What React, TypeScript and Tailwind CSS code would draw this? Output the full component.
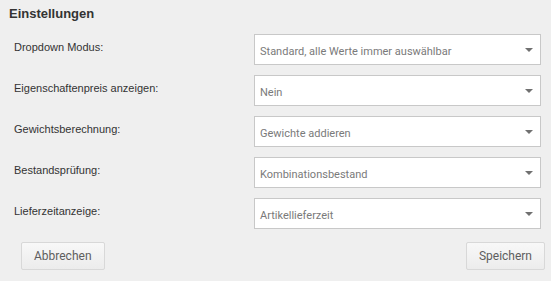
const rows = [
  { label: "Dropdown Modus:", value: "Standard, alle Werte immer auswählbar" },
  { label: "Eigenschaftenpreis anzeigen:", value: "Nein" },
  { label: "Gewichtsberechnung:", value: "Gewichte addieren" },
  { label: "Bestandsprüfung:", value: "Kombinationsbestand" },
  { label: "Lieferzeitanzeige:", value: "Artikellieferzeit" },
];

function Select({ value }: { value: string }) {
  return (
    <div className="relative w-[287px] h-[31px] bg-white border border-[#c8c8c8] pl-[5px] pt-[10px] text-[11px] leading-[13px] text-[#7a7a7a] font-['Roboto',sans-serif]">
      {value}
      <span className="absolute right-[7px] top-[13px] w-0 h-0 border-l-[4px] border-r-[4px] border-t-[4px] border-l-transparent border-r-transparent border-t-[#707070]" />
    </div>
  );
}

function Button({ children }: { children: string }) {
  return (
    <button className="h-[28px] px-[12px] bg-gradient-to-b from-[#f8f8f8] to-[#ececec] border border-[#d8d8d8] rounded-[2px] text-[12px] text-[#5e5e5e] font-['Roboto',sans-serif]">
      {children}
    </button>
  );
}

export default function App() {
  return (
    <div className="w-[551px] h-[281px] bg-[#efefef] pt-[5px] font-['Liberation_Sans',Arial,sans-serif]">
      <h1 className="pl-[9px] text-[13px] leading-[18px] font-bold text-[#333]">Einstellungen</h1>
      <div className="mt-[11px] flex flex-col gap-[10px]">
        {rows.map(r => (
          <div key={r.label} className="flex">
            <div className="w-[254px] pl-[14px] pt-[7px] text-[11px] leading-[13px] text-[#333]">{r.label}</div>
            <Select value={r.value} />
          </div>
        ))}
      </div>
      <div className="mt-[13px] pl-[21px] pr-[6px] flex justify-between">
        <Button>Abbrechen</Button>
        <Button>Speichern</Button>
      </div>
    </div>
  );
}
